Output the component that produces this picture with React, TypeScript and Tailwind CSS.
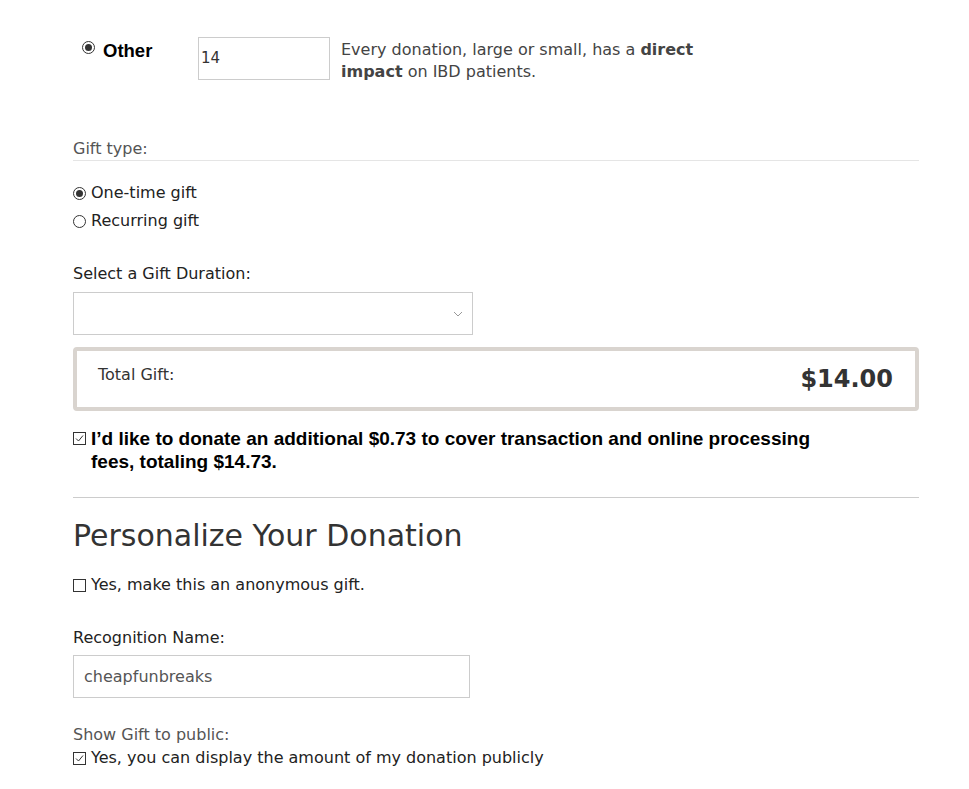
import React from 'react'

const sans = 'font-["DejaVu_Sans",Verdana,sans-serif]'
const narrow = 'font-["Liberation_Sans_Narrow","Arial_Narrow",sans-serif]'

function Radio({ checked }: { checked?: boolean }) {
  return (
    <svg width="13" height="13" viewBox="0 0 13 13" className="shrink-0">
      <circle cx="6.5" cy="6.5" r="6" fill="white" stroke="#333" strokeWidth="1" />
      {checked && <circle cx="6.5" cy="6.5" r="3.5" fill="#333" />}
    </svg>
  )
}

function Check({ checked }: { checked?: boolean }) {
  return (
    <svg width="13" height="13" viewBox="0 0 13 13" className="shrink-0">
      <rect x="0.5" y="0.5" width="12" height="12" fill="white" stroke="#333" strokeWidth="1" />
      {checked && <path d="M3 6.5 L5.5 9 L10 3.5" fill="none" stroke="#333" strokeWidth="1" />}
    </svg>
  )
}

export default function App() {
  return (
    <div className={`bg-white w-[969px] h-[789px] overflow-hidden ${sans} text-[16px] text-[#222]`}>
      <div className="pl-[73px] pr-[50px] pt-[37px]">
        {/* other amount */}
        <div className="flex items-start">
          <div className="flex items-center gap-[8px] w-[125px] pl-[9px]">
            <div className="-mt-[6px]"><Radio checked /></div>
            <span className={`${narrow} font-bold text-[18.5px] text-black`}>Other</span>
          </div>
          <div className="w-[132px] h-[43px] border border-[#ccc] flex items-center px-[2px] text-[15px] text-[#333]">14</div>
          <p className="ml-[11px] mt-[2px] w-[380px] leading-[22px] text-[#444]">
            Every donation, large or small, has a <b>direct impact</b> on IBD patients.
          </p>
        </div>

        {/* gift type */}
        <div className="mt-[56px] text-[#555] pb-[1px] border-b border-[#e5e5e5] leading-[20px]">Gift type:</div>
        <div className="mt-[22px] flex flex-col gap-[8px]">
          <label className="flex items-center gap-[5px] leading-[20px] text-[#222]"><Radio checked />One-time gift</label>
          <label className="flex items-center gap-[5px] leading-[20px] text-[#222]"><Radio />Recurring gift</label>
        </div>

        {/* duration */}
        <div className="mt-[33px] leading-[20px]">Select a Gift Duration:</div>
        <div className="mt-[8px] w-[400px] h-[43px] border border-[#ccc] flex items-center justify-end pr-[9px]">
          <svg width="10" height="6" viewBox="0 0 10 6"><path d="M1 1 L5 5 L9 1" fill="none" stroke="#999" strokeWidth="1" /></svg>
        </div>

        {/* total */}
        <div className="mt-[12px] h-[64px] border-[4px] border-[#d9d4cf] rounded-[4px] flex items-center justify-between pl-[21px] pr-[22px]">
          <span className="text-[#333] -mt-[9px]">Total Gift:</span>
          <span className="font-bold text-[24px] text-[#333]">$14.00</span>
        </div>

        {/* fees */}
        <div className="mt-[16px] flex items-start gap-[5px]">
          <div className="pt-[5px]"><Check checked /></div>
          <p className={`${narrow} font-bold text-[19px] leading-[23px] text-black w-[740px]`}>
            I’d like to donate an additional $0.73 to cover transaction and online processing fees, totaling $14.73.
          </p>
        </div>

        <div className="mt-[24px] border-t border-[#ccc]" />

        <h2 className="mt-[20px] text-[30px] leading-[36px] text-[#333]">Personalize Your Donation</h2>

        <label className="mt-[21px] flex items-center gap-[5px] leading-[20px]"><Check />Yes, make this an anonymous gift.</label>

        <div className="mt-[33px] leading-[20px]">Recognition Name:</div>
        <div className="mt-[7px] w-[397px] h-[43px] border border-[#ccc] flex items-center px-[10px] text-[#555]">cheapfunbreaks</div>

        <div className="mt-[27px] text-[#555] leading-[20px]">Show Gift to public:</div>
        <label className="mt-[3px] flex items-center gap-[5px] leading-[20px]"><Check checked />Yes, you can display the amount of my donation publicly</label>
      </div>
    </div>
  )
}
